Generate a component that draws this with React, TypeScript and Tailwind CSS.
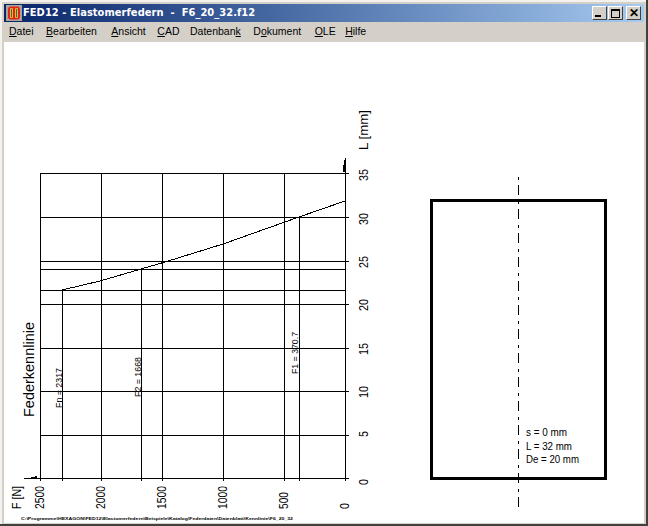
const F = '"Liberation Sans", Arial, sans-serif';
const TITLE = '"DejaVu Sans Condensed", "DejaVu Sans", sans-serif';
const MENU: { parts: string[]; gap: string }[] = [
  { parts: ['D', 'atei'], gap: 'mr-[12.5px]' },
  { parts: ['B', 'earbeiten'], gap: 'mr-[14.5px]' },
  { parts: ['A', 'nsicht'], gap: 'mr-[11.5px]' },
  { parts: ['C', 'AD'], gap: 'mr-[10.5px]' },
  { parts: ['Datenban', 'k', ''], gap: 'mr-[12.5px]' },
  { parts: ['D', 'o', 'kument'], gap: 'mr-[13.5px]' },
  { parts: ['O', 'LE'], gap: 'mr-[9.5px]' },
  { parts: ['H', 'ilfe'], gap: 'mr-0' },
];

function MenuLabel({ parts }: { parts: string[] }) {
  if (parts.length === 3) {
    return (
      <span>
        {parts[0]}
        <span className="underline">{parts[1]}</span>
        {parts[2]}
      </span>
    );
  }
  return (
    <span>
      <span className="underline">{parts[0]}</span>
      {parts[1]}
    </span>
  );
}

function Btn({ children, className = '' }: { children: React.ReactNode; className?: string }) {
  return (
    <div
      className={`w-[15px] h-3.5 bg-[#d4d0c8] border border-t-white border-l-white border-r-[#404040] border-b-[#404040] flex items-center justify-center ${className}`}
    >
      {children}
    </div>
  );
}

function VText({ x, y, size, len, children }: { x: number; y: number; size: number; len?: number; children: string }) {
  return (
    <text
      x={x}
      y={y}
      fontSize={size}
      fontFamily={F}
      fill="#000"
      transform={`rotate(-90 ${x} ${y})`}
      {...(len ? { textLength: len, lengthAdjust: 'spacingAndGlyphs' as const } : {})}
    >
      {children}
    </text>
  );
}

function Drawing() {
  const vs: [number, number][] = [[40, 173], [62, 290], [101, 173], [141, 269], [162, 173], [223, 173], [284, 173], [299, 217]];
  const hs = [217, 261, 304, 348, 391, 435];
  const short = [269, 290];
  const xTicks: [string, number, number][] = [['2500', 44, 23], ['2000', 105, 23], ['1500', 166, 23], ['1000', 227, 23], ['500', 288, 17], ['0', 349, 6]];
  const yTicks: [string, number][] = [['35', 181], ['30', 225], ['25', 268], ['20', 311], ['15', 355], ['10', 398], ['5', 437], ['0', 485]];
  return (
    <svg width="640" height="481" viewBox="4 42 640 481" className="block" shapeRendering="crispEdges">
      <g stroke="#000" strokeWidth="1">
        {vs.map(([x, top]) => (
          <line key={x} x1={x + 0.5} x2={x + 0.5} y1={top} y2={481} />
        ))}
        <line x1="345.5" x2="345.5" y1="158" y2="481" />
        {hs.map((y) => (
          <line key={y} x1="40" x2="349" y1={y + 0.5} y2={y + 0.5} />
        ))}
        <line x1="40" x2="349" y1="173.5" y2="173.5" />
        <line x1="24" x2="349" y1="478.5" y2="478.5" />
        {short.map((y) => (
          <line key={y} x1="40" x2="345" y1={y + 0.5} y2={y + 0.5} />
        ))}
      </g>
      <polyline points="62,290 100,281 141,269 165,262 223,244 299,217 345,201" fill="none" stroke="#000" strokeWidth="1" />
      <path d="M343 168 L345 158 L346 172 L343 172 Z" fill="#000" />
      <path d="M29 478 L37 476 L37 479 L29 479 Z" fill="#000" />
      {xTicks.map(([t, x, len]) => (
        <VText key={t} x={x} y={509} size={12} len={len}>
          {t}
        </VText>
      ))}
      {yTicks.map(([t, y]) => (
        <VText key={t} x={368} y={y} size={12} len={t.length * 6}>
          {t}
        </VText>
      ))}
      <VText x={368} y={150} size={12} len={40}>L [mm]</VText>
      <VText x={21} y={509} size={12} len={23}>F [N]</VText>
      <VText x={34} y={417} size={15} len={95}>Federkennlinie</VText>
      <VText x={62} y={408} size={9} len={40}>Fn = 2317</VText>
      <VText x={141} y={397} size={9} len={40}>F2 = 1668</VText>
      <VText x={298} y={374} size={9} len={42}>F1 = 370.7</VText>
      <rect x="431.5" y="200.5" width="174" height="278" fill="none" stroke="#000" strokeWidth="3" />
      <line x1="518.5" x2="518.5" y1="177" y2="507" stroke="#000" strokeDasharray="3 5 10 6" />
      <text x="526" y="436" fontSize="10" fontFamily={F} textLength="41" lengthAdjust="spacingAndGlyphs">s = 0 mm</text>
      <text x="526" y="450" fontSize="10" fontFamily={F} textLength="46" lengthAdjust="spacingAndGlyphs">L = 32 mm</text>
      <text x="526" y="463" fontSize="10" fontFamily={F} textLength="53" lengthAdjust="spacingAndGlyphs">De = 20 mm</text>
      <text x="21" y="520" fontSize="3" fontFamily={F} fontWeight="700" textLength="272" lengthAdjust="spacingAndGlyphs">
        C:\Programme\HEXAGON\FED12\Elastomerfedern\Beispiele\Katalog\Federdaten\Datenblatt\Kennlinie\F6_20_32
      </text>
    </svg>
  );
}

function AppIcon() {
  return (
    <svg width="16" height="16" viewBox="0 0 16 16" className="shrink-0">
      <rect width="16" height="16" fill="#a8a498" />
      <rect x="2" y="1.5" width="12" height="13" rx="3" fill="#e8201c" />
      <rect x="4" y="3" width="3" height="10" rx="1" fill="#d8c030" />
      <rect x="9" y="3" width="3" height="10" rx="1" fill="#d8c030" />
      <rect x="5" y="4" width="1" height="8" fill="#3a6a50" />
      <rect x="10" y="4" width="1" height="8" fill="#3a6a50" />
    </svg>
  );
}

export default function App() {
  return (
    <div className="w-[648px] h-[526px] bg-[#d4d0c8] border-r-2 border-b-2 border-r-[#404040] border-b-[#404040] overflow-hidden" style={{ fontFamily: F }}>
      <div className="h-full border-t-2 border-l-2 border-t-[#f4f2ee] border-l-[#f4f2ee] pt-0.5 pl-0.5 pr-0.5 pb-px flex flex-col">
        <div className="h-[18px] shrink-0 flex items-center pl-0.5 pr-[3px] bg-gradient-to-r from-[#0a246a] to-[#a6caf0]">
          <AppIcon />
          <span className="ml-px text-[11px] tracking-[0.05px] font-bold text-white whitespace-pre" style={{ fontFamily: TITLE }}>
            FED12 - Elastomerfedern  -  F6_20_32.f12
          </span>
          <div className="ml-auto flex items-center">
            <Btn><div className="w-1.5 h-0.5 bg-black mt-1.5 mr-1" /></Btn>
            <Btn className="ml-px"><div className="w-[9px] h-[9px] border border-black border-t-2" /></Btn>
            <Btn className="ml-[3px]"><span className="text-[12px] leading-none font-bold">✕</span></Btn>
          </div>
        </div>
        <div className="h-5 shrink-0 flex items-center pl-[5px] text-[10.5px] text-black">
          {MENU.map((m) => (
            <div key={m.parts.join('')} className={m.gap}>
              <MenuLabel parts={m.parts} />
            </div>
          ))}
        </div>
        <div className="flex-1 bg-white overflow-hidden">
          <Drawing />
        </div>
      </div>
    </div>
  );
}
